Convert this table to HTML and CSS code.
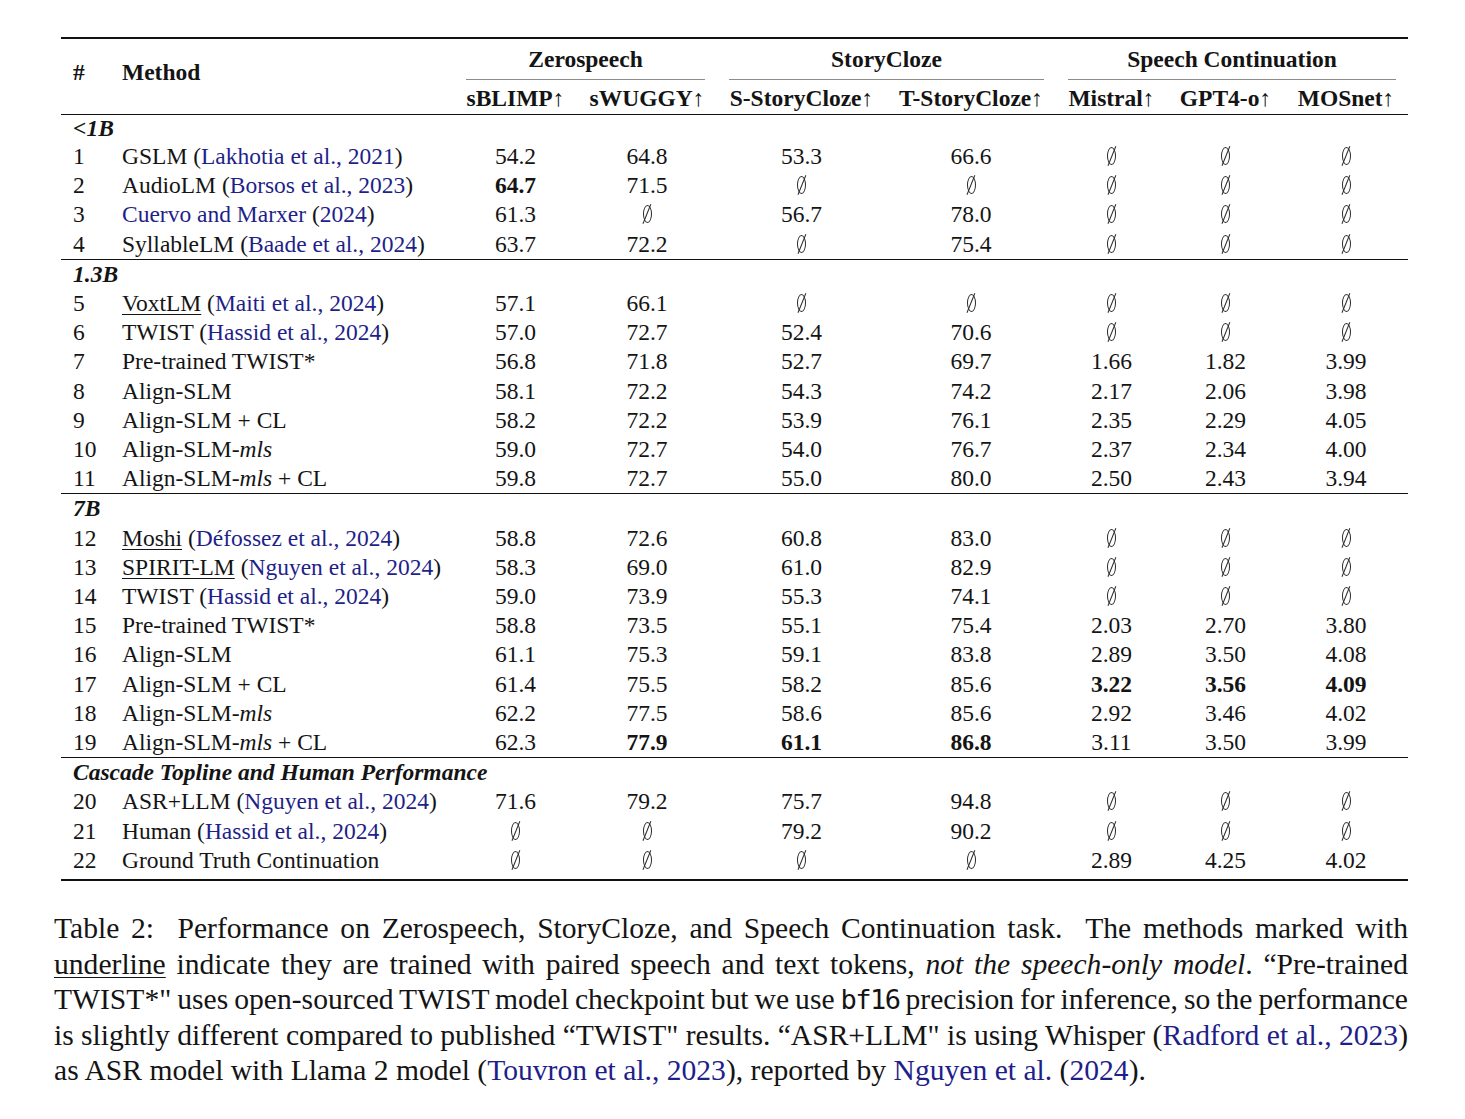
FILE: index.html
```html
<!DOCTYPE html>
<html lang="en">
<head>
<meta charset="utf-8">
<title>Table 2</title>
<link rel="stylesheet" href="styles.css">
</head>
<body>
<main class="page">
<table class="results">
<colgroup>
<col class="c-num"><col class="c-method"><col class="c-sb"><col class="c-sw"><col class="c-ss"><col class="c-ts"><col class="c-mi"><col class="c-gp"><col class="c-mo">
</colgroup>
<thead>
<tr class="hr1">
<th class="rs left" rowspan="2">#</th>
<th class="rs left" rowspan="2">Method</th>
<th class="grp" colspan="2"><div class="cm">Zerospeech</div></th>
<th class="grp" colspan="2"><div class="cm">StoryCloze</div></th>
<th class="grp" colspan="3"><div class="cm">Speech Continuation</div></th>
</tr>
<tr class="hr2">
<th>sBLIMP<span class="ar">↑</span></th>
<th>sWUGGY<span class="ar">↑</span></th>
<th>S-StoryCloze<span class="ar">↑</span></th>
<th>T-StoryCloze<span class="ar">↑</span></th>
<th>Mistral<span class="ar">↑</span></th>
<th>GPT4-o<span class="ar">↑</span></th>
<th>MOSnet<span class="ar">↑</span></th>
</tr>
</thead>
<tbody>
<tr class="lab first"><td colspan="9">&lt;1B</td></tr>
<tr><td>1</td><td>GSLM (<span class="cite">Lakhotia et al., 2021</span>)</td><td>54.2</td><td>64.8</td><td>53.3</td><td>66.6</td><td><span class="es"></span></td><td><span class="es"></span></td><td><span class="es"></span></td></tr>
<tr><td>2</td><td>AudioLM (<span class="cite">Borsos et al., 2023</span>)</td><td><b>64.7</b></td><td>71.5</td><td><span class="es"></span></td><td><span class="es"></span></td><td><span class="es"></span></td><td><span class="es"></span></td><td><span class="es"></span></td></tr>
<tr><td>3</td><td><span class="cite">Cuervo and Marxer</span> (<span class="cite">2024</span>)</td><td>61.3</td><td><span class="es"></span></td><td>56.7</td><td>78.0</td><td><span class="es"></span></td><td><span class="es"></span></td><td><span class="es"></span></td></tr>
<tr><td>4</td><td>SyllableLM (<span class="cite">Baade et al., 2024</span>)</td><td>63.7</td><td>72.2</td><td><span class="es"></span></td><td>75.4</td><td><span class="es"></span></td><td><span class="es"></span></td><td><span class="es"></span></td></tr>

<tr class="lab"><td colspan="9">1.3B</td></tr>
<tr><td>5</td><td><u>VoxtLM</u> (<span class="cite">Maiti et al., 2024</span>)</td><td>57.1</td><td>66.1</td><td><span class="es"></span></td><td><span class="es"></span></td><td><span class="es"></span></td><td><span class="es"></span></td><td><span class="es"></span></td></tr>
<tr><td>6</td><td>TWIST (<span class="cite">Hassid et al., 2024</span>)</td><td>57.0</td><td>72.7</td><td>52.4</td><td>70.6</td><td><span class="es"></span></td><td><span class="es"></span></td><td><span class="es"></span></td></tr>
<tr><td>7</td><td>Pre-trained TWIST*</td><td>56.8</td><td>71.8</td><td>52.7</td><td>69.7</td><td>1.66</td><td>1.82</td><td>3.99</td></tr>
<tr><td>8</td><td>Align-SLM</td><td>58.1</td><td>72.2</td><td>54.3</td><td>74.2</td><td>2.17</td><td>2.06</td><td>3.98</td></tr>
<tr><td>9</td><td>Align-SLM + CL</td><td>58.2</td><td>72.2</td><td>53.9</td><td>76.1</td><td>2.35</td><td>2.29</td><td>4.05</td></tr>
<tr><td>10</td><td>Align-SLM-<i>mls</i></td><td>59.0</td><td>72.7</td><td>54.0</td><td>76.7</td><td>2.37</td><td>2.34</td><td>4.00</td></tr>
<tr><td>11</td><td>Align-SLM-<i>mls</i> + CL</td><td>59.8</td><td>72.7</td><td>55.0</td><td>80.0</td><td>2.50</td><td>2.43</td><td>3.94</td></tr>

<tr class="lab"><td colspan="9">7B</td></tr>
<tr><td>12</td><td><u>Moshi</u> (<span class="cite">Défossez et al., 2024</span>)</td><td>58.8</td><td>72.6</td><td>60.8</td><td>83.0</td><td><span class="es"></span></td><td><span class="es"></span></td><td><span class="es"></span></td></tr>
<tr><td>13</td><td><u>SPIRIT-LM</u> (<span class="cite">Nguyen et al., 2024</span>)</td><td>58.3</td><td>69.0</td><td>61.0</td><td>82.9</td><td><span class="es"></span></td><td><span class="es"></span></td><td><span class="es"></span></td></tr>
<tr><td>14</td><td>TWIST (<span class="cite">Hassid et al., 2024</span>)</td><td>59.0</td><td>73.9</td><td>55.3</td><td>74.1</td><td><span class="es"></span></td><td><span class="es"></span></td><td><span class="es"></span></td></tr>
<tr><td>15</td><td>Pre-trained TWIST*</td><td>58.8</td><td>73.5</td><td>55.1</td><td>75.4</td><td>2.03</td><td>2.70</td><td>3.80</td></tr>
<tr><td>16</td><td>Align-SLM</td><td>61.1</td><td>75.3</td><td>59.1</td><td>83.8</td><td>2.89</td><td>3.50</td><td>4.08</td></tr>
<tr><td>17</td><td>Align-SLM + CL</td><td>61.4</td><td>75.5</td><td>58.2</td><td>85.6</td><td><b>3.22</b></td><td><b>3.56</b></td><td><b>4.09</b></td></tr>
<tr><td>18</td><td>Align-SLM-<i>mls</i></td><td>62.2</td><td>77.5</td><td>58.6</td><td>85.6</td><td>2.92</td><td>3.46</td><td>4.02</td></tr>
<tr><td>19</td><td>Align-SLM-<i>mls</i> + CL</td><td>62.3</td><td><b>77.9</b></td><td><b>61.1</b></td><td><b>86.8</b></td><td>3.11</td><td>3.50</td><td>3.99</td></tr>

<tr class="lab"><td colspan="9">Cascade Topline and Human Performance</td></tr>
<tr><td>20</td><td>ASR+LLM (<span class="cite">Nguyen et al., 2024</span>)</td><td>71.6</td><td>79.2</td><td>75.7</td><td>94.8</td><td><span class="es"></span></td><td><span class="es"></span></td><td><span class="es"></span></td></tr>
<tr><td>21</td><td>Human (<span class="cite">Hassid et al., 2024</span>)</td><td><span class="es"></span></td><td><span class="es"></span></td><td>79.2</td><td>90.2</td><td><span class="es"></span></td><td><span class="es"></span></td><td><span class="es"></span></td></tr>
<tr class="last"><td>22</td><td>Ground Truth Continuation</td><td><span class="es"></span></td><td><span class="es"></span></td><td><span class="es"></span></td><td><span class="es"></span></td><td>2.89</td><td>4.25</td><td>4.02</td></tr>
</tbody>
</table>

<p class="caption">
<span class="ln">Table 2:&nbsp; Performance on Zerospeech, StoryCloze, and Speech Continuation task.&nbsp; The methods marked with</span>
<span class="ln"><u>underline</u> indicate they are trained with paired speech and text tokens, <i>not the speech-only model</i>. “Pre-trained</span>
<span class="ln">TWIST*&quot; uses open-sourced TWIST model checkpoint but we use <code>bf16</code> precision for inference, so the performance</span>
<span class="ln">is slightly different compared to published “TWIST&quot; results. “ASR+LLM&quot; is using Whisper (<span class="cite">Radford et al., 2023</span>)</span>
<span class="ln end">as ASR model with Llama 2 model (<span class="cite">Touvron et al., 2023</span>), reported by <span class="cite">Nguyen et al.</span> (<span class="cite">2024</span>).</span>
</p>
</main>
</body>
</html>
```

FILE: styles.css
```css
html, body {
  margin: 0;
  padding: 0;
  background: #ffffff;
}

body {
  font-family: "Liberation Serif", "Times New Roman", serif;
  color: #141414;
}

.page {
  width: 1354px;
  padding: 37px 0 0 54px;
}

.results {
  margin-left: 7px;
  width: 1347px;
  table-layout: fixed;
  border-collapse: separate;
  border-spacing: 0;
  font-size: 23.5px;
}

.c-num { width: 49px; }
.c-method { width: 344px; }
.c-sb { width: 123px; }
.c-sw { width: 140px; }
.c-ss { width: 169px; }
.c-ts { width: 170px; }
.c-mi { width: 111px; }
.c-gp { width: 117px; }
.c-mo { width: 124px; }

.results th,
.results td {
  padding: 0 12px;
  white-space: nowrap;
  text-align: center;
}

.results th {
  font-weight: bold;
  line-height: 28px;
}

.hr1 th {
  border-top: 2px solid #111;
}

.hr1 th.grp {
  padding-top: 6px;
  vertical-align: bottom;
}

.cm {
  padding-bottom: 6px;
  border-bottom: 1.5px solid #8c8c8c;
}

th.rs {
  vertical-align: middle;
  padding-bottom: 10px;
  border-bottom: 1px solid #111;
}

th.left,
.results td:nth-child(1),
.results td:nth-child(2) {
  text-align: left;
}

.hr2 th {
  padding-top: 4px;
  padding-bottom: 2px;
  border-bottom: 1px solid #111;
}

.ar {
  font-weight: normal;
}

.results td {
  line-height: 29.2px;
  height: 29.2px;
}

.lab td {
  font-weight: bold;
  font-style: italic;
  text-align: left;
  border-top: 1px solid #111;
}

.lab.first td {
  border-top: none;
  line-height: 27px;
  height: 27px;
}

.last td {
  padding-bottom: 4px;
  border-bottom: 2px solid #111;
}

.cite {
  color: #1f1f8a;
}

u {
  text-decoration-thickness: 1px;
  text-underline-offset: 3px;
}

.es {
  display: inline-block;
  position: relative;
  width: 7px;
  height: 16px;
  border: 1.2px solid #2a2a2a;
  border-radius: 50%;
  vertical-align: -1px;
}

.es::after {
  content: "";
  position: absolute;
  left: 50%;
  top: 50%;
  width: 1.2px;
  height: 21px;
  background: #2a2a2a;
  transform: translate(-50%, -50%) rotate(22deg);
}

.caption {
  margin: 30px 0 0 0;
  font-size: 29.6px;
  line-height: 35.5px;
}

.caption .ln {
  display: block;
  white-space: nowrap;
  text-align: justify;
  text-align-last: justify;
  word-spacing: -3px;
}

.caption .ln.end {
  text-align: left;
  text-align-last: left;
  word-spacing: 0;
}

.caption code {
  font-family: "DejaVu Sans Mono", "Liberation Mono", monospace;
  font-size: 27px;
  letter-spacing: -1.5px;
}
```
